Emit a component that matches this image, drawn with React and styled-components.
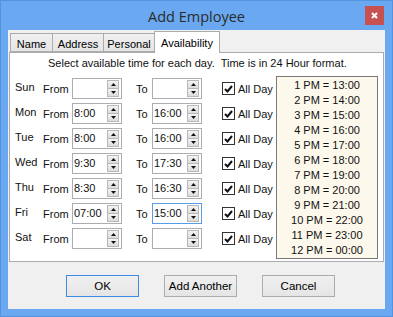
import React from 'react';
import styled, { createGlobalStyle } from 'styled-components';

const days = [
  { day: 'Sun', from: '', to: '' },
  { day: 'Mon', from: '8:00', to: '16:00' },
  { day: 'Tue', from: '8:00', to: '16:00' },
  { day: 'Wed', from: '9:30', to: '17:30' },
  { day: 'Thu', from: '8:30', to: '16:30' },
  { day: 'Fri', from: '07:00', to: '15:00', focused: true },
  { day: 'Sat', from: '', to: '' },
];

const legend = [
  '1 PM = 13:00',
  '2 PM = 14:00',
  '3 PM = 15:00',
  '4 PM = 16:00',
  '5 PM = 17:00',
  '6 PM = 18:00',
  '7 PM = 19:00',
  '8 PM = 20:00',
  '9 PM = 21:00',
  '10 PM = 22:00',
  '11 PM = 23:00',
  '12 PM = 00:00',
];

const tabs = [
  { label: 'Name', w: 43 },
  { label: 'Address', w: 52 },
  { label: 'Personal', w: 52 },
  { label: 'Availability', w: 66, active: true },
];

function Arrow({ up }) {
  return (
    <svg width="5" height="3" viewBox="0 0 5 3">
      <polygon points={up ? '0,3 5,3 2.5,0' : '0,0 5,0 2.5,3'} fill="#111" />
    </svg>
  );
}

function TimeBox({ value, focused }) {
  return (
    <SpinBox $focused={focused}>
      <SpinText>{value}</SpinText>
      <SpinColumn>
        <SpinButton><Arrow up /></SpinButton>
        <SpinButton><Arrow /></SpinButton>
      </SpinColumn>
    </SpinBox>
  );
}

export default function App() {
  return (
    <Window>
      <GlobalStyle />
      <TitleBar>
        <Title>Add Employee</Title>
        <CloseButton>
          <svg width="7" height="7" viewBox="0 0 7 7">
            <path d="M1 1 L6 6 M6 1 L1 6" stroke="#fff" strokeWidth="2" />
          </svg>
        </CloseButton>
      </TitleBar>

      <Client>
        <TabRow>
          {tabs.map((t) => (
            <Tab key={t.label} $w={t.w} $active={t.active}>
              {t.label}
            </Tab>
          ))}
        </TabRow>

        <Panel>
          <Instruction>
            Select available time for each day.&nbsp; Time is in 24 Hour format.
          </Instruction>
          <Body>
            <Rows>
              {days.map((d) => (
                <Row key={d.day}>
                  <DayLabel>{d.day}</DayLabel>
                  <FieldLabel $w={29}>From</FieldLabel>
                  <TimeBox value={d.from} />
                  <FieldLabel $w={30} $pl={14}>To</FieldLabel>
                  <TimeBox value={d.to} focused={d.focused} />
                  <CheckWrap>
                    <CheckBox>
                      <svg width="9" height="8" viewBox="0 0 9 8">
                        <path
                          d="M1 4 L3.5 6.5 L8 1"
                          stroke="#111"
                          strokeWidth="2"
                          fill="none"
                        />
                      </svg>
                    </CheckBox>
                    All Day
                  </CheckWrap>
                </Row>
              ))}
            </Rows>
            <Legend>
              {legend.map((l) => (
                <LegendLine key={l}>{l}</LegendLine>
              ))}
            </Legend>
          </Body>
        </Panel>

        <ButtonRow>
          <DialogButton $default>OK</DialogButton>
          <DialogButton>Add Another</DialogButton>
          <DialogButton>Cancel</DialogButton>
        </ButtonRow>
      </Client>
    </Window>
  );
}

const GlobalStyle = createGlobalStyle`
  html, body {
    margin: 0;
    padding: 0;
    background: #6aa9f1;
  }
  * { box-sizing: border-box; }
`;

const Window = styled.div`
  width: 393px;
  height: 317px;
  background: #6aa9f1;
  border: 1px solid #5393e0;
  font-family: "Liberation Sans", Arial, sans-serif;
  font-size: 11px;
  color: #111;
  display: flex;
  flex-direction: column;
`;

const TitleBar = styled.div`
  height: 29px;
  display: flex;
  align-items: center;
  justify-content: center;
  position: relative;
`;

const Title = styled.div`
  font-family: "Open Sans", "Noto Sans", sans-serif;
  font-size: 14.5px;
  color: #2b2b2b;
  margin-top: 1px;
`;

const CloseButton = styled.div`
  position: absolute;
  right: 8px;
  top: 5px;
  width: 19px;
  height: 19px;
  background: #c75050;
  display: flex;
  align-items: center;
  justify-content: center;
`;

const Client = styled.div`
  margin: 0 7px 7px 7px;
  background: #f0f0f0;
  flex: 1;
  display: flex;
  flex-direction: column;
`;

const TabRow = styled.div`
  height: 22px;
  display: flex;
  align-items: flex-end;
  padding-left: 2px;
`;

const Tab = styled.div`
  position: relative;
  width: ${(p) => p.$w}px;
  height: ${(p) => (p.$active ? 22 : 19)}px;
  margin-left: -1px;
  margin-bottom: ${(p) => (p.$active ? -1 : 0)}px;
  z-index: ${(p) => (p.$active ? 2 : 0)};
  border: 1px solid #acacac;
  border-bottom: ${(p) => (p.$active ? 'none' : '1px solid #acacac')};
  background: ${(p) =>
    p.$active ? '#fff' : 'linear-gradient(#f0f0f0, #e5e5e5)'};
  font-size: 11px;
  display: flex;
  align-items: center;
  justify-content: center;
  padding-top: ${(p) => (p.$active ? 0 : 2)}px;
  color: #000;
  white-space: nowrap;
  &:first-child {
    margin-left: 0;
  }
`;

const Panel = styled.div`
  position: relative;
  z-index: 1;
  width: 375px;
  height: 210px;
  margin-left: 1px;
  background: #fff;
  border: 1px solid #acacac;
`;

const Instruction = styled.div`
  padding: 3px 0 0 38px;
  height: 23px;
  line-height: 14px;
`;

const Body = styled.div`
  display: flex;
  align-items: flex-start;
  padding-left: 5px;
`;

const Rows = styled.div`
  width: 261px;
  padding-top: 2px;
  display: flex;
  flex-direction: column;
  gap: 4px;
`;

const Row = styled.div`
  display: flex;
  align-items: center;
  height: 21px;
`;

const DayLabel = styled.div`
  width: 28px;
  margin-top: -3px;
`;

const FieldLabel = styled.div`
  width: ${(p) => p.$w}px;
  padding-left: ${(p) => p.$pl || 0}px;
`;

const SpinBox = styled.div`
  width: 50px;
  height: 21px;
  border: 1px solid ${(p) => (p.$focused ? '#569de5' : '#abadb3')};
  background: #fff;
  display: flex;
  align-items: stretch;
`;

const SpinText = styled.div`
  flex: 1;
  font-size: 11px;
  padding-left: 1px;
  line-height: 18px;
  white-space: nowrap;
`;

const SpinColumn = styled.div`
  width: 12px;
  margin: 1px 2px 1px 0;
  display: flex;
  flex-direction: column;
`;

const SpinButton = styled.div`
  flex: 1;
  border: 1px solid #b8b8b8;
  background: linear-gradient(#f4f4f4, #dcdcdc);
  display: flex;
  align-items: center;
  justify-content: center;
  & + & {
    margin-top: -1px;
  }
`;

const CheckWrap = styled.div`
  margin-left: 20px;
  display: flex;
  align-items: center;
  gap: 3px;
`;

const CheckBox = styled.div`
  width: 13px;
  height: 13px;
  border: 1px solid #333;
  background: #fff;
  display: flex;
  align-items: center;
  justify-content: center;
`;

const Legend = styled.div`
  width: 102px;
  height: 183px;
  background: #fdf8ec;
  border: 1px solid #7a7a7a;
  padding-top: 1px;
  color: #111;
`;

const LegendLine = styled.div`
  height: 15px;
  line-height: 15px;
  text-align: center;
`;

const ButtonRow = styled.div`
  display: flex;
  gap: 25px;
  padding-left: 58px;
  margin-top: 13px;
`;

const DialogButton = styled.div`
  width: 73px;
  height: 22px;
  border: 1px solid ${(p) => (p.$default ? '#3c8ce6' : '#acacac')};
  background: linear-gradient(#f0f0f0, #e5e5e5);
  font-size: 11.5px;
  display: flex;
  align-items: center;
  justify-content: center;
  color: #000;
`;
